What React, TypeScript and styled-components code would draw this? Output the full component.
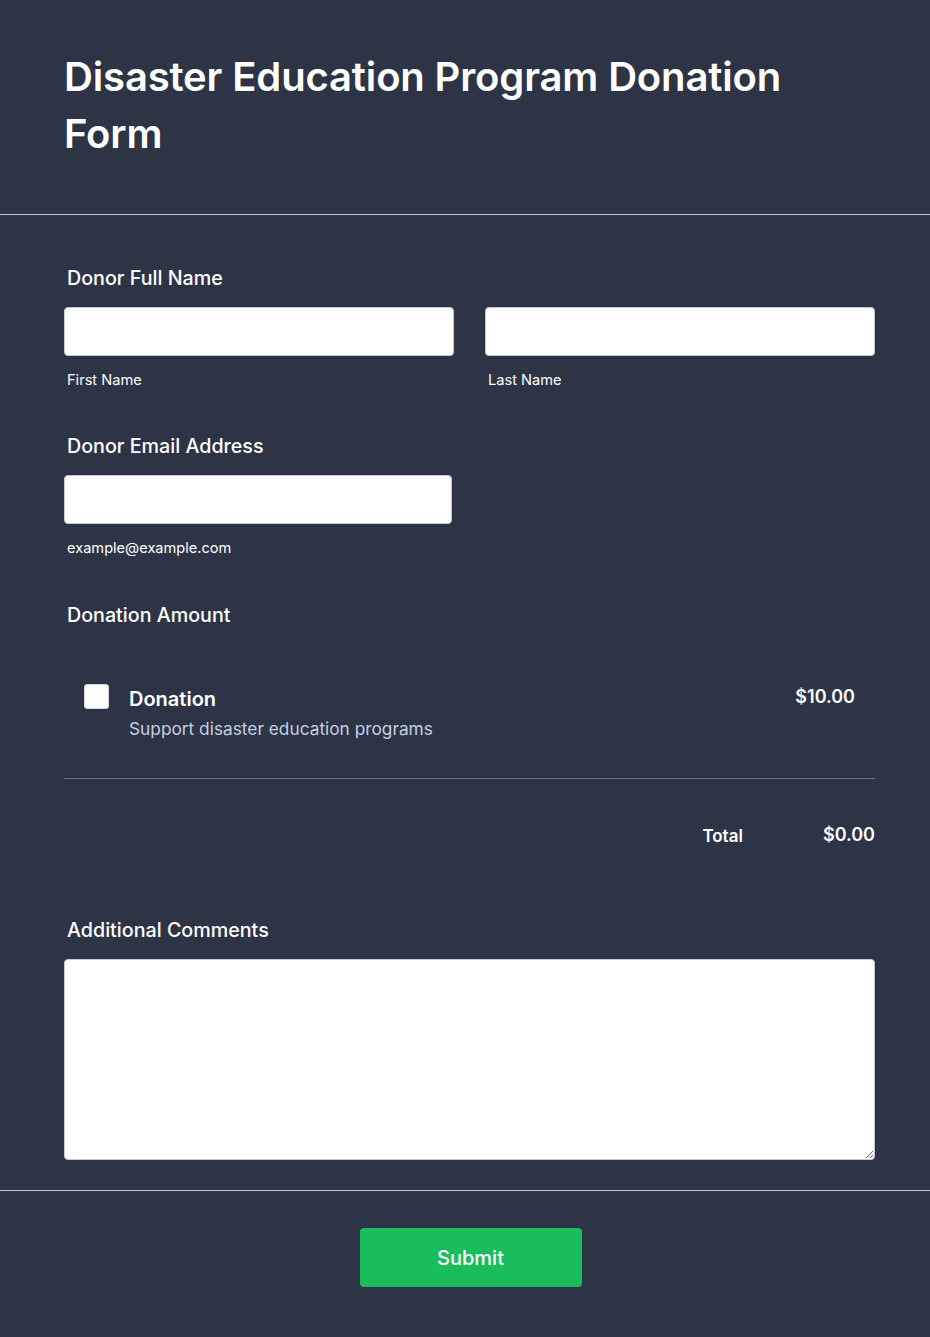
import React from "react";
import styled, { createGlobalStyle } from "styled-components";

const Global = createGlobalStyle`
  html, body { margin: 0; padding: 0; background: #2d3446; }
  body { font-family: Inter, "Noto Sans", sans-serif; color: #fff; }
  * { box-sizing: border-box; }
`;

const Page = styled.div`
  width: 930px;
  min-height: 1337px;
  background: #2d3446;
`;

const Header = styled.header`
  padding: 48px 64px 52px;
  border-bottom: 1px solid #c8cbd2;
`;

const Title = styled.h1`
  margin: 0;
  font-size: 40px;
  line-height: 57px;
  font-weight: 600;
  letter-spacing: -0.15px;
  color: #fff;
`;

const Body = styled.div`
  padding: 51px 55px 30px 64px;
  display: flex;
  flex-direction: column;
`;

const Field = styled.section<{ $mb?: number }>`
  display: flex;
  flex-direction: column;
  margin-bottom: ${(p) => p.$mb ?? 36}px;
`;

const Label = styled.div`
  font-size: 19.7px;
  font-weight: 500;
  line-height: 24px;
  padding-left: 3px;
  margin-bottom: 17px;
`;

const Row = styled.div`
  display: grid;
  grid-template-columns: 1fr 1fr;
  column-gap: 31px;
`;

const Col = styled.div`
  display: flex;
  flex-direction: column;
`;

const Input = styled.input<{ $w?: number }>`
  width: ${(p) => (p.$w ? `${p.$w}px` : "100%")};
  height: 49px;
  border: 1px solid #c3c7d0;
  border-radius: 4px;
  background: #fff;
  outline: none;
`;

const Sub = styled.div`
  font-size: 14.6px;
  line-height: 18px;
  padding-left: 3px;
  margin-top: 15px;
  color: #fff;
`;

const Product = styled.div`
  display: flex;
  align-items: flex-start;
  padding: 29px 20px 0 20px;
  gap: 20px;
`;

const Check = styled.span`
  width: 25px;
  height: 25px;
  border-radius: 3px;
  background: #fff;
  border: 1px solid #d4d7de;
  flex-shrink: 0;
  margin-top: 11px;
`;

const ProductInfo = styled.div`
  flex: 1;
  display: flex;
  flex-direction: column;
  padding-top: 13px;
`;

const ProductName = styled.div`
  font-size: 20px;
  font-weight: 600;
  line-height: 26px;
`;

const ProductDesc = styled.div`
  font-size: 17.3px;
  line-height: 22px;
  margin-top: 6px;
  color: #c7cfe0;
`;

const Price = styled.div`
  font-size: 18px;
  font-weight: 600;
  line-height: 24px;
  padding-top: 12px;
`;

const Divider = styled.hr`
  border: none;
  border-top: 1px solid #6b7080;
  margin: 38px 0 0;
`;

const TotalRow = styled.div`
  display: flex;
  justify-content: flex-end;
  align-items: center;
  gap: 80px;
  padding-top: 43px;
  margin-bottom: 70px;
`;

const TotalLabel = styled.span`
  font-size: 17px;
  font-weight: 600;
  line-height: 24px;
  padding-top: 2px;
`;

const TotalValue = styled.span`
  font-size: 18px;
  font-weight: 600;
  line-height: 24px;
`;

const TextArea = styled.textarea`
  width: 100%;
  height: 201px;
  border: 1px solid #c3c7d0;
  border-radius: 4px;
  background: #fff;
  outline: none;
  display: block;
`;

const Footer = styled.footer`
  border-top: 1px solid #c8cbd2;
  display: flex;
  justify-content: center;
  padding: 37px 0 50px;
`;

const Submit = styled.button`
  width: 222px;
  height: 59px;
  margin-left: 11px;
  background: #19bd5c;
  border: none;
  border-radius: 4px;
  color: #fff;
  font-family: Inter, "Noto Sans", sans-serif;
  font-size: 20px;
  font-weight: 500;
`;

export default function App() {
  return (
    <Page>
      <Global />
      <Header>
        <Title>
          Disaster Education Program Donation
          <br />
          Form
        </Title>
      </Header>
      <Body>
        <Field $mb={45}>
          <Label>Donor Full Name</Label>
          <Row>
            <Col>
              <Input />
              <Sub>First Name</Sub>
            </Col>
            <Col>
              <Input />
              <Sub>Last Name</Sub>
            </Col>
          </Row>
        </Field>
        <Field $mb={46}>
          <Label>Donor Email Address</Label>
          <Input $w={388} />
          <Sub>example@example.com</Sub>
        </Field>
        <Field $mb={0}>
          <Label>Donation Amount</Label>
          <Product>
            <Check />
            <ProductInfo>
              <ProductName>Donation</ProductName>
              <ProductDesc>Support disaster education programs</ProductDesc>
            </ProductInfo>
            <Price>$10.00</Price>
          </Product>
          <Divider />
          <TotalRow>
            <TotalLabel>Total</TotalLabel>
            <TotalValue>$0.00</TotalValue>
          </TotalRow>
        </Field>
        <Field $mb={0}>
          <Label>Additional Comments</Label>
          <TextArea />
        </Field>
      </Body>
      <Footer>
        <Submit>Submit</Submit>
      </Footer>
    </Page>
  );
}
